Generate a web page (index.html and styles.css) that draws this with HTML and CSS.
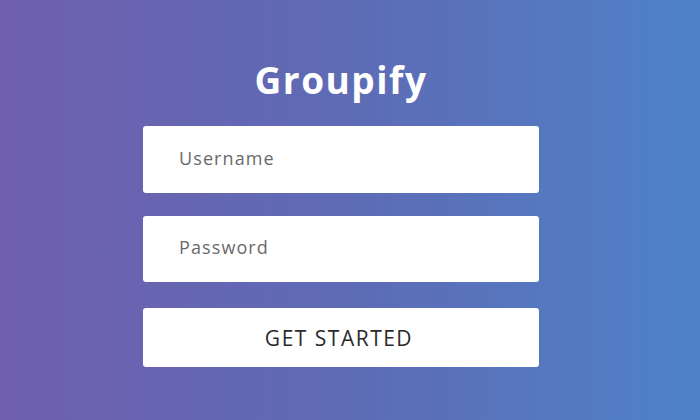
FILE: index.html
```html
<!DOCTYPE html>
<html>
<head>
<meta charset="utf-8">
<link rel="stylesheet" href="styles.css">
</head>
<body>
<main class="page">
  <h1 class="title">Groupify</h1>
  <form class="form">
    <input class="field" type="text" placeholder="Username">
    <input class="field field-pass" type="password" placeholder="Password">
    <button class="btn" type="button">GET STARTED</button>
  </form>
</main>
</body>
</html>
```
FILE: styles.css
```css
html, body {
  margin: 0;
  padding: 0;
  height: 100%;
}
body {
  background: linear-gradient(to right, #6f5fae 0%, #5e6bb5 50%, #4e82c8 100%);
  font-family: "Open Sans", "DejaVu Sans", sans-serif;
}
.page {
  height: 420px;
  display: flex;
  flex-direction: column;
  align-items: center;
  padding-top: 56px;
  padding-right: 18px;
  box-sizing: border-box;
}
.title {
  margin: 0;
  color: #ffffff;
  font-size: 37px;
  font-weight: 700;
  line-height: 48px;
  letter-spacing: 1.5px;
}
.form {
  margin-top: 22px;
  width: 396px;
  display: flex;
  flex-direction: column;
}
.field {
  height: 67px;
  border: none;
  border-radius: 3px;
  background: #fff;
  padding: 0 36px;
  font-family: inherit;
  font-size: 18px;
  letter-spacing: 1.1px;
  color: #555;
  box-sizing: border-box;
  outline: none;
  padding-bottom: 4px;
}
.field::placeholder {
  color: #6a6a6a;
}
.field-pass {
  margin-top: 23px;
  height: 66px;
}
.btn {
  margin-top: 26px;
  height: 59px;
  border: none;
  border-radius: 3px;
  background: #fff;
  font-family: inherit;
  font-size: 21px;
  color: #2a2a2a;
  letter-spacing: 1.5px;
  padding-left: 2px;
}
```
